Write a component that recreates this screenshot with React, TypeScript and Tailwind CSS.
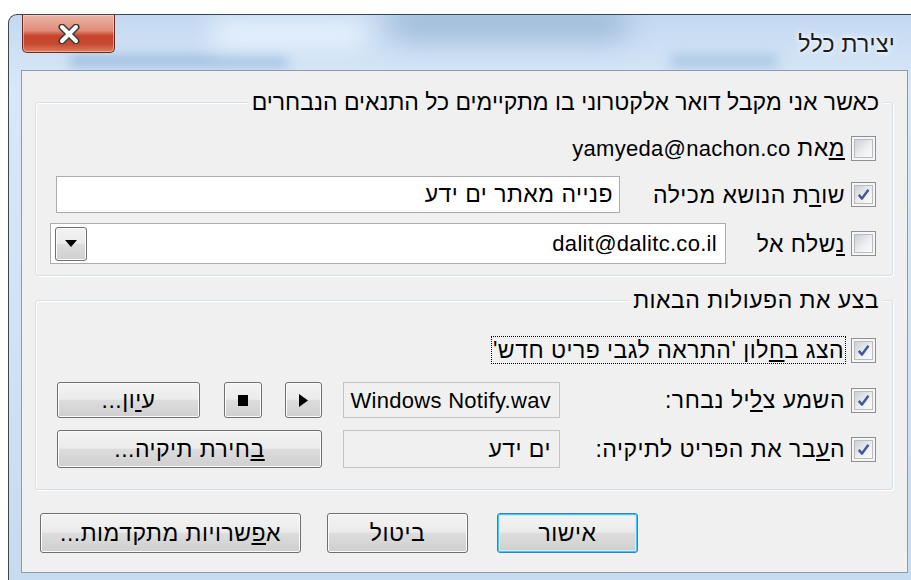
import React from "react";

type BoxProps = { children?: React.ReactNode; className?: string };

// Latin runs use a slightly smaller size than the Hebrew text around them
const latin = "text-[22px] tracking-[0.3px]";

const CheckBox = ({ checked = false }: { checked?: boolean }) => (
  <span className="flex h-[25px] w-[25px] shrink-0 items-center justify-center border border-[#8e8f8f] bg-[#f6f6f6] p-[2px]">
    <span className="flex h-full w-full items-center justify-center border border-[#b9bbbf] bg-[linear-gradient(135deg,#cdd0d5,#eef0f2_60%,#fafafa)]">
      {checked && (
        <svg viewBox="0 0 14 14" className="h-[15px] w-[15px]">
          <path d="M2.6 7.4 L5.6 10.8 L11.6 2.6" fill="none" stroke="#45589a" strokeWidth="2.3" strokeLinejoin="round" />
        </svg>
      )}
    </span>
  </span>
);

const PushButton = ({ children, className = "", isDefault = false }: BoxProps & { isDefault?: boolean }) => (
  <button
    type="button"
    className={`flex shrink-0 items-center justify-center rounded-[3px] border text-black bg-[linear-gradient(180deg,#f3f3f3_0%,#ebebeb_48%,#dddddd_50%,#cfcfcf_100%)] ${
      isDefault
        ? "border-[#3c7fb1] shadow-[inset_0_0_0_1px_#48c6f6,inset_0_0_0_2px_#c8eefc]"
        : "border-[#707070] shadow-[inset_0_0_0_1px_#fbfbfb]"
    } ${className}`}
  >
    {children}
  </button>
);

const GroupBox = ({ title, titleClass = "", children, className = "" }: BoxProps & { title: string; titleClass?: string }) => (
  <div className={`relative mx-[14px] ml-[13px] rounded-[3px] border border-[#d5dfe5] shadow-[inset_1px_1px_0_#ffffff,1px_1px_0_#ffffff] ${className}`}>
    <span className={`absolute right-[9px] top-[-13px] bg-[#f0f0f0] px-[4px] leading-[24px] whitespace-nowrap ${titleClass}`}>{title}</span>
    {children}
  </div>
);

const Row = ({ children, className = "" }: BoxProps) => (
  <div className={`flex items-center justify-between pr-[16px] ${className}`}>{children}</div>
);

const Label = ({ checked, children }: BoxProps & { checked?: boolean }) => (
  <div className="flex items-center gap-[6px]">
    <CheckBox checked={checked} />
    <span className="leading-[24px] whitespace-nowrap">{children}</span>
  </div>
);

const ReadOnlyField = ({ children }: BoxProps) => (
  <div className="flex h-full w-[217px] items-center border border-[#c3c3c3] bg-[#f0f0f0] px-[8px] whitespace-nowrap">
    {children}
  </div>
);

export default function App() {
  return (
    <div className="h-[580px] w-[911px] overflow-hidden bg-white font-['Liberation_Sans','DejaVu_Sans',sans-serif] text-[23px] tracking-[0.5px] text-black">
      {/* window frame */}
      <div className="relative ml-[8px] mt-[14px] h-[600px] w-[920px] overflow-hidden rounded-tl-[9px] border-l border-t border-[#3e4650] bg-[linear-gradient(180deg,#c3d9f1_0%,#d9e8f8_12%,#cfe1f4_60%,#c5daf0_100%)]">
        {/* blurred glass behind the caption */}
        <div className="pointer-events-none absolute left-[380px] top-[-10px] h-[34px] w-[240px] rounded-full bg-[#9fbbd9] blur-[14px]" />
        <div className="pointer-events-none absolute left-[60px] top-[40px] h-[12px] w-[220px] rounded-full bg-[#9dbde0] blur-[6px]" />
        <div className="pointer-events-none absolute left-[660px] top-[40px] h-[12px] w-[110px] rounded-full bg-[#a9c6e4] blur-[6px]" />
        <div className="pointer-events-none absolute left-[200px] top-[4px] h-[30px] w-[160px] rounded-full bg-[#e6f1fc] blur-[12px]" />

        {/* caption */}
        <div className="relative flex h-[55px] items-start justify-between pl-[13px] pr-[33px]">
          <button
            type="button"
            className="flex h-[38px] w-[93px] items-center justify-center rounded-b-[5px] border border-t-0 border-[#6b2a21] bg-[linear-gradient(180deg,#ecb4a6_0%,#e08c79_42%,#c8432c_56%,#c54a31_78%,#df7b5d_100%)] shadow-[inset_0_0_0_1px_rgba(255,220,210,0.5)]"
          >
            <svg viewBox="0 0 26 20" className="h-[20px] w-[26px]">
              <path d="M6 3 L20 17 M20 3 L6 17" stroke="#3b3b3b" strokeWidth="7" strokeLinecap="round" />
              <path d="M6 3 L20 17 M20 3 L6 17" stroke="#ffffff" strokeWidth="4" strokeLinecap="round" />
            </svg>
          </button>
          <div dir="rtl" className="mt-[16px] text-[23px] leading-[26px] tracking-[0.3px] text-[#1b1b1b] whitespace-nowrap [text-shadow:0_0_8px_#ffffff,0_0_4px_#ffffff]">
            יצירת כלל
          </div>
        </div>

        {/* client area */}
        <div dir="rtl" className="relative ml-[12px] flex h-[503px] w-[887px] flex-col border border-[#8d9cab] bg-[#f0f0f0]">
          <GroupBox
            title="כאשר אני מקבל דואר אלקטרוני בו מתקיימים כל התנאים הנבחרים"
            titleClass="tracking-normal"
            className="mt-[31px] h-[174px]"
          >
            <Row className="mt-[30px] h-[30px]">
              <Label>
                <u>מ</u>את <span className={latin}>yamyeda@nachon.co</span>
              </Label>
            </Row>
            <Row className="mt-[13px] h-[37px]">
              <Label checked>
                שו<u>ר</u>ת הנושא מכילה
              </Label>
              <div className="ml-[20px] flex h-full w-[564px] items-center border border-[#abadb3] bg-white px-[6px] whitespace-nowrap">
                פנייה מאתר ים ידע
              </div>
            </Row>
            <Row className="mt-[10px] h-[41px]">
              <Label>
                <u>נ</u>שלח אל
              </Label>
              <div className="ml-[14px] flex h-full w-[676px] items-center justify-between border border-[#abadb3] bg-white pr-[8px]">
                <span dir="ltr" className={latin}>dalit@dalitc.co.il</span>
                <PushButton className="ml-[4px] h-[34px] w-[32px]">
                  <svg viewBox="0 0 12 8" className="h-[8px] w-[12px]">
                    <path d="M0 0 H12 L6 7 Z" fill="#000" />
                  </svg>
                </PushButton>
              </div>
            </Row>
          </GroupBox>

          <GroupBox title="בצע את הפעולות הבאות" className="mt-[24px] h-[190px]">
            <Row className="mt-[34px] h-[30px]">
              <div className="flex items-center gap-[5px]">
                <CheckBox checked />
                <span className="border border-dotted border-black px-[1px] leading-[26px] whitespace-nowrap">
                  הצג ב<u>ח</u>לון 'התראה לגבי פריט חדש'
                </span>
              </div>
            </Row>
            <Row className="mt-[17px] h-[36px]">
              <Label checked>
                השמע צ<u>ל</u>יל נבחר:
              </Label>
              <div className="ml-[21px] flex h-full items-center">
                <ReadOnlyField>
                  <span dir="ltr" className={latin}>Windows Notify.wav</span>
                </ReadOnlyField>
                <PushButton className="mr-[21px] h-full w-[37px]">
                  <svg viewBox="0 0 9 13" className="h-[13px] w-[9px]">
                    <path d="M0 0 L9 6.5 L0 13 Z" fill="#000" />
                  </svg>
                </PushButton>
                <PushButton className="mr-[23px] h-full w-[38px]">
                  <span className="block h-[11px] w-[10px] bg-black" />
                </PushButton>
                <PushButton className="mr-[24px] h-full w-[143px]">
                  ע<u>י</u>ון...
                </PushButton>
              </div>
            </Row>
            <Row className="mt-[12px] h-[38px]">
              <Label checked>
                ה<u>ע</u>בר את הפריט לתיקיה:
              </Label>
              <div className="ml-[21px] flex h-full items-center">
                <ReadOnlyField>ים ידע</ReadOnlyField>
                <PushButton className="mr-[21px] h-full w-[265px]">
                  <u>ב</u>חירת תיקיה...
                </PushButton>
              </div>
            </Row>
          </GroupBox>

          <div className="mr-[269px] mt-[23px] flex h-[40px] items-center">
            <PushButton isDefault className="h-full w-[141px]">
              אישור
            </PushButton>
            <PushButton className="mr-[29px] h-full w-[141px]">ביטול</PushButton>
            <PushButton className="mr-[26px] h-full w-[261px]">
              א<u>פ</u>שרויות מתקדמות...
            </PushButton>
          </div>
        </div>
      </div>
    </div>
  );
}
